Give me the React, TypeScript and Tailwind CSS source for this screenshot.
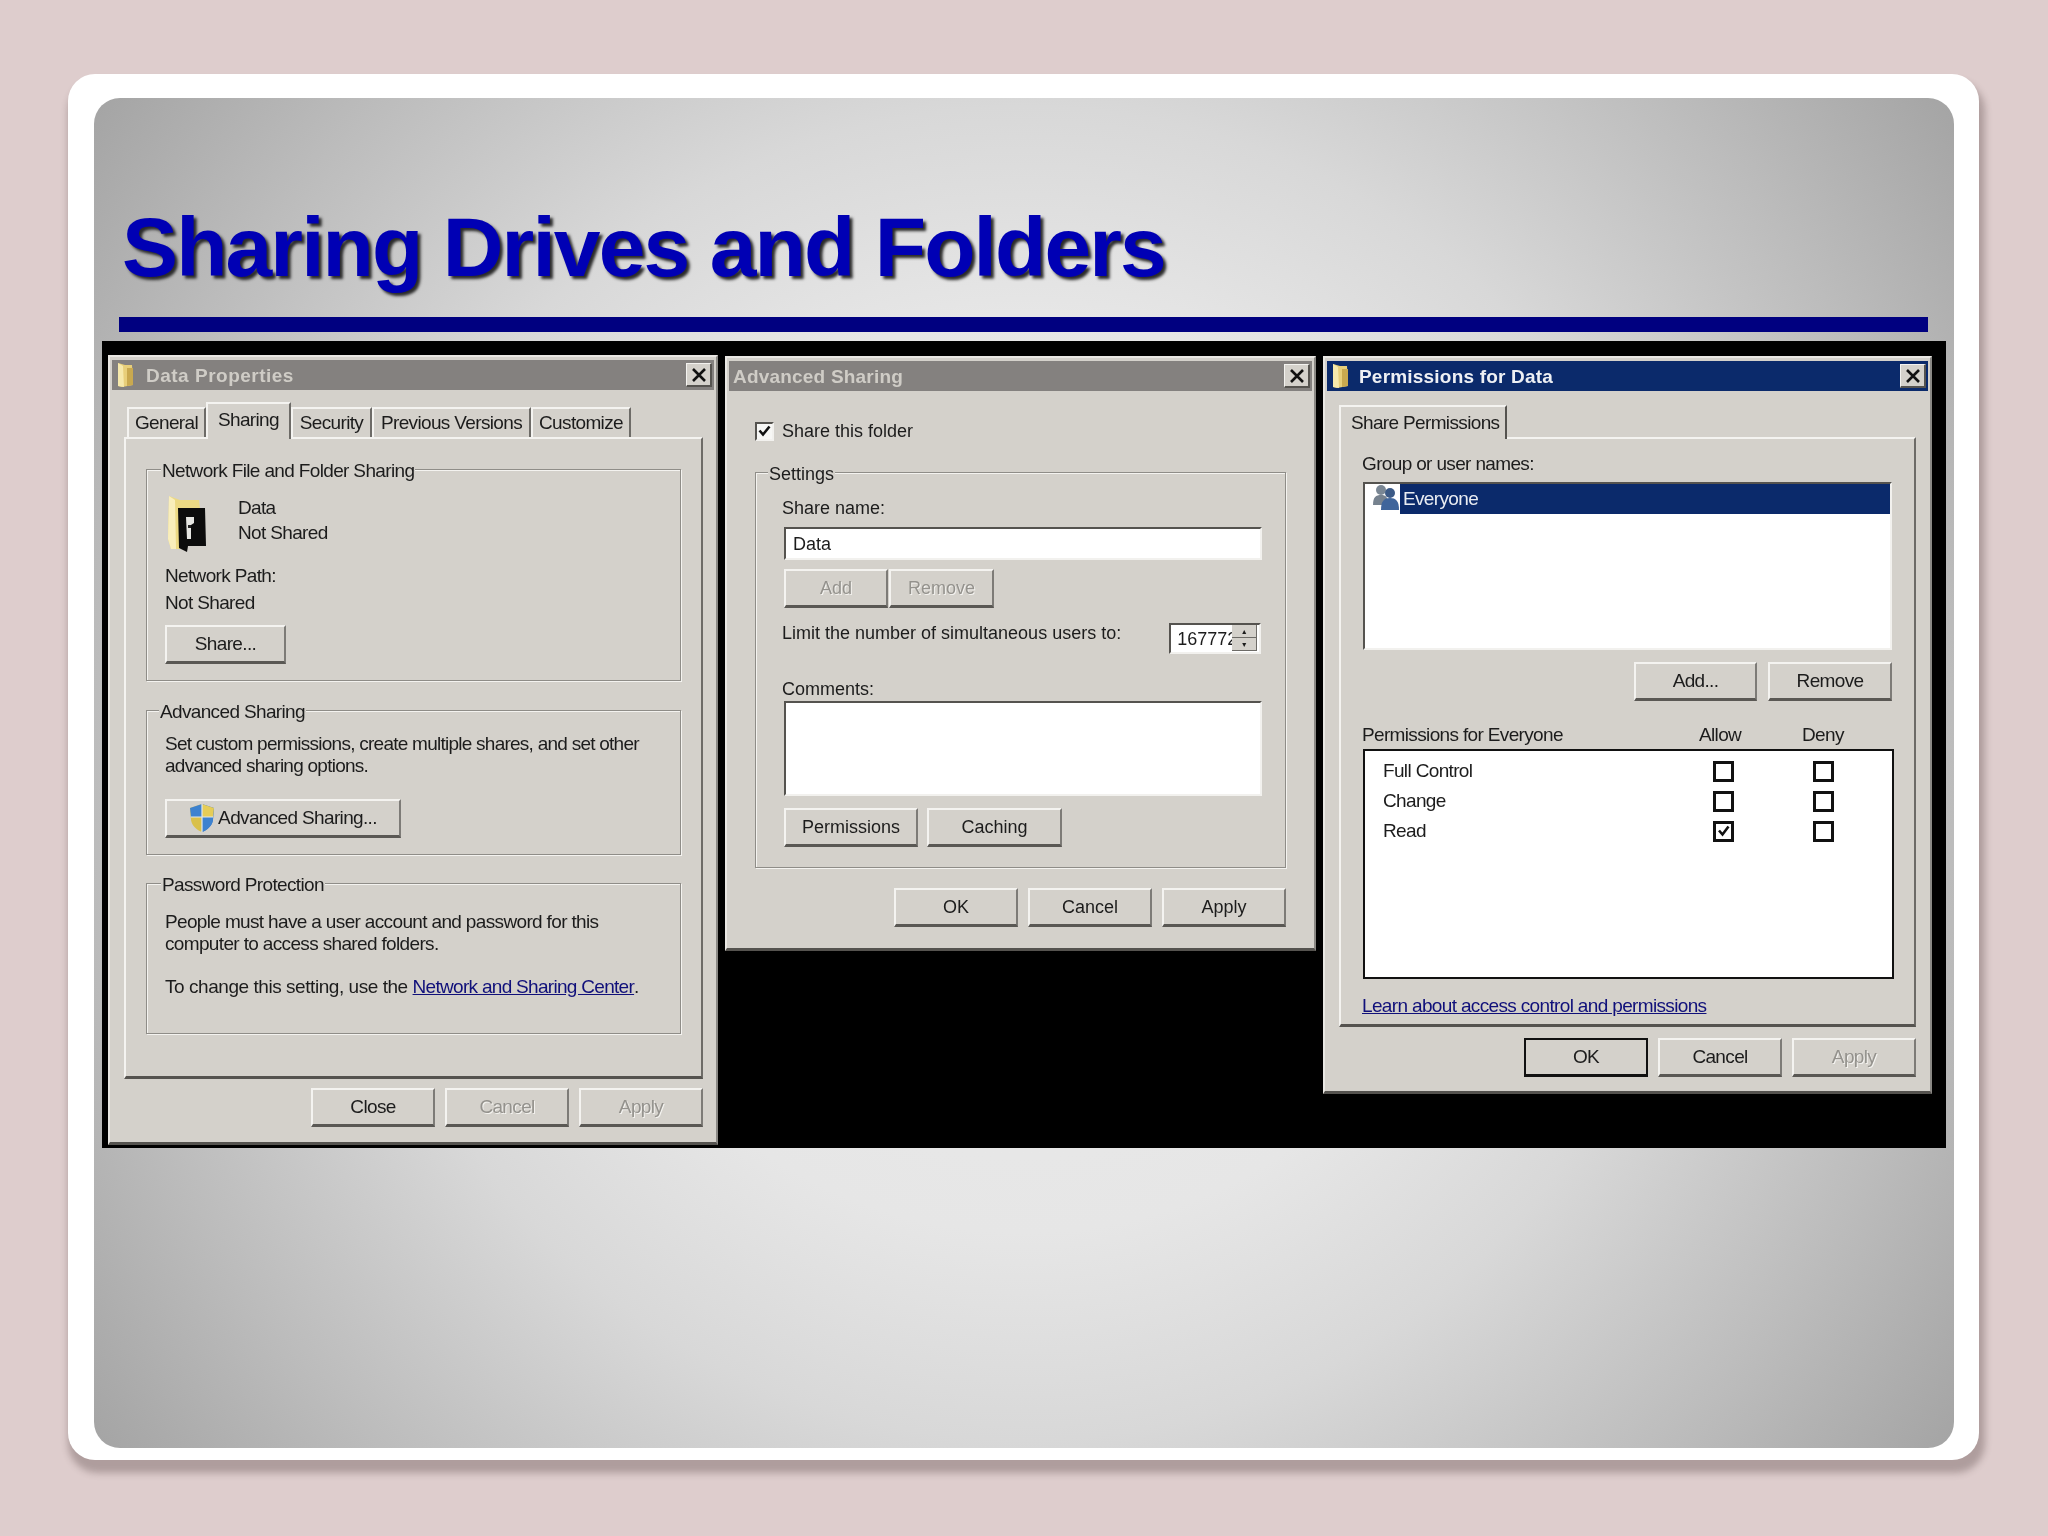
import { type ReactNode } from "react";

const bevel = "border-t-2 border-l-2 border-t-[#f4f3f0] border-l-[#f4f3f0] border-r-2 border-b-[3px] border-r-[#7d7b77] border-b-[#5a5854]";
const sunken = "border-t-2 border-l-2 border-t-[#55534f] border-l-[#55534f] border-r-2 border-b-2 border-r-[#f2f1ee] border-b-[#f2f1ee]";
const narrow = "text-[19px] tracking-[-0.65px]";

function SmallFolder() {
  return (
    <svg width="19" height="26" viewBox="0 0 19 26" className="shrink-0">
      <path d="M2 1 L9 3 L16 3 L17 23 L6 25 L2 24 Z" fill="#e8cf7a" />
      <path d="M2 1 L7 4 L8 25 L2 24 Z" fill="#f6e9ac" />
      <path d="M11 6 L17 6 L17 23 L11 24 Z" fill="#c9a94f" />
    </svg>
  );
}

function BigFolder() {
  return (
    <svg width="44" height="58" viewBox="0 0 44 58">
      <path d="M3 1 L14 5 L33 5 L34 14 L14 14 L14 54 L5 54 L2 44 Z" fill="#ecd984" />
      <path d="M3 1 L9 5 L10 54 L5 54 L2 44 Z" fill="#f9eebb" />
      <path d="M12 13 L39 13 L40 51 L22 51 L21 57 L13 53 Z" fill="#0c0c0c" />
      <path d="M20 22 L28 22 L28 28 L25 30 L25 44 L21 44 Z" fill="#e6e6e2" />
      <rect x="22" y="30" width="3" height="3" fill="#222" />
    </svg>
  );
}

function Shield() {
  return (
    <svg width="26" height="30" viewBox="0 0 26 30" className="shrink-0">
      <path d="M13 1 L25 5 L24 17 C23 23 18 27 13 29 Z" fill="#2f6fc0" />
      <path d="M13 1 L1 5 L2 17 C3 23 8 27 13 29 Z" fill="#d9c04a" />
      <path d="M13 1 L1 5 L2 14 L13 14 Z" fill="#3d82cf" />
      <path d="M13 1 L25 5 L24 14 L13 14 Z" fill="#e6cd57" />
      <path d="M13 14 L24 14 L24 17 C23 23 18 27 13 29 Z" fill="#3d82cf" />
      <path d="M13 1 L13 29 M2 14 L24 14" stroke="#dfe7ec" strokeWidth="1.2" />
    </svg>
  );
}

function GroupIcon() {
  return (
    <svg width="29" height="28" viewBox="0 0 29 28" className="shrink-0">
      <circle cx="10" cy="6" r="5" fill="#7a8794" />
      <path d="M2 21 C2 13 5 11 10 11 C15 11 17 13 17 21 Z" fill="#76828f" />
      <circle cx="19" cy="9" r="5" fill="#3c5a86" />
      <path d="M10 26 C10 17 13 14 19 14 C25 14 28 17 28 26 Z" fill="#3f659b" />
    </svg>
  );
}

function Close() {
  return (
    <div className="ml-auto flex h-[24px] w-[26px] items-center justify-center bg-[#d4d1cb] border-t border-l border-t-[#f4f3f0] border-l-[#f4f3f0] border-r-2 border-b-2 border-r-[#55534f] border-b-[#55534f]">
      <svg width="16" height="14" viewBox="0 0 16 14">
        <path d="M2 1 L14 13 M14 1 L2 13" stroke="#111" strokeWidth="2.6" />
      </svg>
    </div>
  );
}

function TitleBar({ title, active, folder, className = "" }: { title: string; active?: boolean; folder?: boolean; className?: string }) {
  return (
    <div className={`mx-[2px] mt-[3px] flex h-[30px] items-center pl-[4px] pr-[2px] ${active ? "bg-[#0b2a6b]" : "bg-[#84817f]"}`}>
      {folder && <SmallFolder />}
      <span className={`text-[19px] font-bold leading-none tracking-[0.2px] ${className} ${active ? "text-[#eef0f4]" : "text-[#cfccc6]"}`}>{title}</span>
      <Close />
    </div>
  );
}

function Btn({ label, w = 124, h = 39, disabled, primary, icon }: { label: string; w?: number; h?: number; disabled?: boolean; primary?: boolean; icon?: ReactNode }) {
  const frame = primary ? "border-2 border-[#111] border-b-[3px]" : bevel;
  return (
    <div style={{ width: w, height: h }} className={`flex shrink-0 items-center justify-center bg-[#d4d1cb] ${frame} ${disabled ? "text-[#94928d] [text-shadow:1px_1px_0_#f4f3f0]" : ""}`}>
      {icon}
      <span>{label}</span>
    </div>
  );
}

function Tab({ label, w, active }: { label: string; w: number; active?: boolean }) {
  return (
    <div style={{ width: w }} className={`relative z-10 flex items-center justify-center border-t-2 border-l-2 border-t-[#f4f3f0] border-l-[#f4f3f0] border-r-2 border-r-[#6d6b67] bg-[#d4d1cb] ${active ? "-mb-[2px] h-[37px] pb-[4px]" : "h-[30px]"}`}>
      {label}
    </div>
  );
}

function Group({ legend, left = 14, h, className = "", children }: { legend: string; left?: number; h: number; className?: string; children: ReactNode }) {
  return (
    <div style={{ height: h }} className={`relative border border-[#8f8d88] shadow-[1px_1px_0_#f4f3f0,inset_1px_1px_0_#f4f3f0] ${className}`}>
      <span style={{ left }} className="absolute -top-[10px] bg-[#d4d1cb] px-[1px] leading-[22px]">{legend}</span>
      {children}
    </div>
  );
}

function Dialog({ w, h, mt, className = "", children }: { w: number; h: number; mt: number; className?: string; children: ReactNode }) {
  return (
    <div style={{ width: w, height: h, marginTop: mt }} className={`shrink-0 bg-[#d4d1cb] border-t-2 border-l-2 border-t-[#e9e7e3] border-l-[#e9e7e3] border-r-2 border-b-[3px] border-r-[#8a8884] border-b-[#55534f] ${className}`}>
      {children}
    </div>
  );
}

function DataProperties() {
  return (
    <Dialog w={610} h={790} mt={14} className={narrow}>
      <TitleBar title="Data Properties" folder className="ml-[11px] tracking-[0.5px]" />
      <div className="pl-[14px] pr-[13px]">
        <div className="ml-[3px] mt-[12px] flex h-[35px] items-end">
          <Tab label="General" w={79} />
          <Tab label="Sharing" w={85} active />
          <Tab label="Security" w={81} />
          <Tab label="Previous Versions" w={159} />
          <Tab label="Customize" w={100} />
        </div>
        <div className="h-[642px] border-t-2 border-l-2 border-t-[#f4f3f0] border-l-[#f4f3f0] border-r-2 border-b-[3px] border-r-[#6d6b67] border-b-[#55534f] px-[20px] pt-[30px]">
          <Group legend="Network File and Folder Sharing" h={212}>
            <div className="flex pl-[19px] pt-[25px]">
              <BigFolder />
              <div className="ml-[28px] leading-[25px]">
                <div>Data</div>
                <div>Not Shared</div>
              </div>
            </div>
            <div className="mt-[9px] pl-[18px] leading-[27px]">
              <div>Network Path:</div>
              <div>Not Shared</div>
            </div>
            <div className="ml-[18px] mt-[9px]">
              <Btn label="Share..." w={121} />
            </div>
          </Group>
          <Group legend="Advanced Sharing" left={12} h={145} className="mt-[29px]">
            <p className="pl-[18px] pt-[22px] leading-[22px] tracking-[-0.75px]">
              Set custom permissions, create multiple shares, and set other
              <br />
              advanced sharing options.
            </p>
            <div className="ml-[18px] mt-[22px]">
              <Btn label="Advanced Sharing..." w={236} icon={<span className="mr-[3px]"><Shield /></span>} />
            </div>
          </Group>
          <Group legend="Password Protection" h={151} className="mt-[28px]">
            <p className="pl-[18px] pt-[27px] leading-[22px]">
              People must have a user account and password for this
              <br />
              computer to access shared folders.
            </p>
            <p className="mt-[21px] pl-[18px] leading-[22px] tracking-[-0.45px]">
              To change this setting, use the <span className="tracking-[-0.7px] text-[#10107a] underline">Network and Sharing Center</span>.
            </p>
          </Group>
        </div>
        <div className="mt-[9px] flex justify-end gap-[10px]">
          <Btn label="Close" />
          <Btn label="Cancel" disabled />
          <Btn label="Apply" disabled />
        </div>
      </div>
    </Dialog>
  );
}

function AdvancedSharing() {
  return (
    <Dialog w={591} h={595} mt={15}>
      <TitleBar title="Advanced Sharing" />
      <div className="pl-[28px] pr-[28px]">
        <div className="mt-[27px] flex h-[26px] items-center">
          <div className={`flex h-[19px] w-[19px] items-center justify-center bg-[#f7f7f5] ${sunken}`}>
            <svg width="13" height="12" viewBox="0 0 13 12">
              <path d="M1.5 5.5 L5 9.5 L11.5 1.5" fill="none" stroke="#111" strokeWidth="2.6" />
            </svg>
          </div>
          <span className="ml-[8px]">Share this folder</span>
        </div>
        <Group legend="Settings" left={12} h={396} className="mt-[28px]">
          <div className="pl-[26px] pr-[23px] pt-[23px]">
            <div className="leading-[24px]">Share name:</div>
            <div className={`ml-[2px] mt-[7px] flex h-[33px] w-[478px] items-center bg-white pl-[7px] ${sunken}`}>Data</div>
            <div className="ml-[2px] mt-[9px] flex">
              <Btn label="Add" w={104} disabled />
              <div className="ml-[1px]"><Btn label="Remove" w={105} disabled /></div>
            </div>
            <div className="mt-[15px] flex items-start">
              <span className="leading-[20px]">Limit the number of simultaneous users to:</span>
              <div className={`ml-[48px] flex h-[31px] w-[92px] overflow-hidden bg-white pl-[6px] ${sunken}`}>
                <span className="w-[55px] overflow-hidden leading-[28px]">167772</span>
                <div className="flex flex-col">
                  <div className="flex h-[13px] w-[25px] items-center justify-center border-b border-r border-[#6d6b67] bg-[#d4d1cb] text-[7px] leading-none">▲</div>
                  <div className="flex h-[13px] w-[25px] items-center justify-center border-b border-r border-[#6d6b67] bg-[#d4d1cb] text-[7px] leading-none">▼</div>
                </div>
              </div>
            </div>
            <div className="mt-[25px] leading-[20px]">Comments:</div>
            <div className={`ml-[2px] mt-[2px] h-[95px] w-[478px] bg-white ${sunken}`} />
            <div className="ml-[2px] mt-[12px] flex gap-[9px]">
              <Btn label="Permissions" w={134} />
              <Btn label="Caching" w={135} />
            </div>
          </div>
        </Group>
        <div className="mt-[20px] flex justify-end gap-[10px]">
          <Btn label="OK" />
          <Btn label="Cancel" />
          <Btn label="Apply" />
        </div>
      </div>
    </Dialog>
  );
}

function PermRow({ label, checked }: { label: string; checked?: boolean }) {
  return (
    <div className="flex h-[30px] items-center pl-[18px]">
      <span className="w-[330px]">{label}</span>
      <div className="flex h-[21px] w-[21px] items-center justify-center border-[3px] border-[#111]">
        {checked && (
          <svg width="13" height="12" viewBox="0 0 13 12">
            <path d="M2 5.5 L5.5 9.5 L11.5 1.5" fill="none" stroke="#111" strokeWidth="2.6" />
          </svg>
        )}
      </div>
      <div className="ml-[79px] h-[21px] w-[21px] border-[3px] border-[#111]" />
    </div>
  );
}

function PermissionsDialog() {
  return (
    <Dialog w={609} h={738} mt={15} className={narrow}>
      <TitleBar title="Permissions for Data" active folder className="ml-[9px]" />
      <div className="pl-[14px] pr-[14px]">
        <div className="mt-[14px] flex h-[32px] items-end">
          <div className="relative z-10 -mb-[2px] flex h-[34px] w-[168px] items-center border-t-2 border-l-2 border-t-[#f4f3f0] border-l-[#f4f3f0] border-r-2 border-r-[#55534f] bg-[#d4d1cb] pl-[10px]">Share Permissions</div>
        </div>
        <div className="h-[590px] border-t-2 border-l-2 border-t-[#f4f3f0] border-l-[#f4f3f0] border-r-2 border-b-[3px] border-r-[#6d6b67] border-b-[#55534f] pl-[21px] pt-[14px]">
          <div className="leading-[22px]">Group or user names:</div>
          <div className={`ml-[1px] mt-[7px] h-[168px] w-[529px] bg-white ${sunken}`}>
            <div className="flex h-[30px] pl-[6px]">
              <GroupIcon />
              <div className="flex-1 bg-[#0b2a6b] pl-[3px] leading-[30px] text-[#e9ecf2]">Everyone</div>
            </div>
          </div>
          <div className="mt-[12px] flex w-[530px] justify-end gap-[11px]">
            <Btn label="Add..." w={123} />
            <Btn label="Remove" w={124} />
          </div>
          <div className="mt-[23px] flex leading-[22px]">
            <span className="w-[337px]">Permissions for Everyone</span>
            <span className="w-[103px]">Allow</span>
            <span>Deny</span>
          </div>
          <div className="ml-[1px] mt-[3px] h-[230px] w-[531px] border-2 border-[#111] bg-white pt-[5px]">
            <PermRow label="Full Control" />
            <PermRow label="Change" />
            <PermRow label="Read" checked />
          </div>
          <div className="mt-[16px] leading-[22px] text-[#10107a] underline">Learn about access control and permissions</div>
        </div>
        <div className="mt-[11px] flex justify-end gap-[10px]">
          <Btn label="OK" primary />
          <Btn label="Cancel" />
          <Btn label="Apply" disabled />
        </div>
      </div>
    </Dialog>
  );
}

export default function App() {
  return (
    <div className="h-[1536px] w-[2048px] overflow-hidden bg-[#decdcd] pl-[68px] pt-[74px] font-['Liberation_Sans',Arial,sans-serif] text-[18px] leading-[22px] text-[#1c1c1c]">
      <div className="h-[1386px] w-[1911px] rounded-[27px] bg-white pl-[26px] pr-[25px] pt-[24px] shadow-[3px_10px_7px_3px_rgba(80,60,60,0.33)]">
        <div className="h-[1350px] rounded-[26px] bg-[radial-gradient(circle_at_center,#ececec_0%,#e6e6e6_40%,#d8d8d8_58%,#bcbcbc_81%,#a4a4a4_100%)] pt-[99px]">
          <h1 className="ml-[28px] text-[84px] font-bold leading-[100px] tracking-[-1.9px] text-[#0000b4] [text-shadow:3px_3px_3px_#2a2a2a]">Sharing Drives and Folders</h1>
          <div className="ml-[25px] mt-[20px] h-[15px] w-[1809px] bg-[#000080]" />
          <div className="ml-[8px] mt-[9px] flex h-[807px] w-[1844px] items-start gap-[7px] bg-black pl-[6px] blur-[0.5px]">
            <DataProperties />
            <AdvancedSharing />
            <PermissionsDialog />
          </div>
        </div>
      </div>
    </div>
  );
}
